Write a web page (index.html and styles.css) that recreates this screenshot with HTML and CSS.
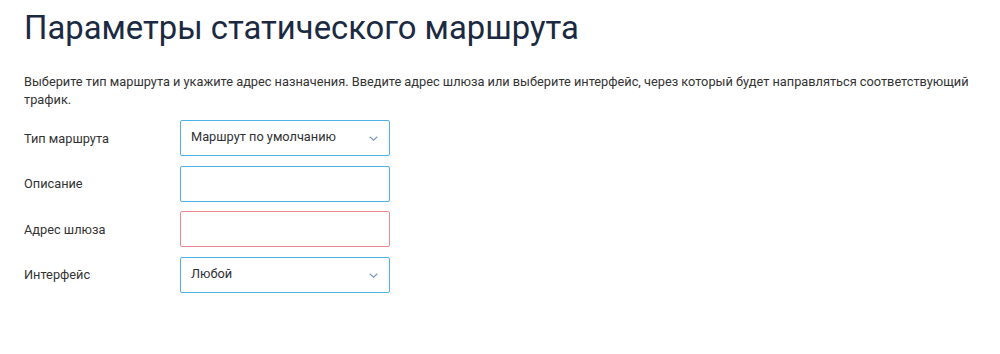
FILE: index.html
```html
<!DOCTYPE html>
<html lang="ru">
<head>
<meta charset="utf-8">
<link rel="stylesheet" href="styles.css">
</head>
<body>
<main class="page">
  <h1 class="title">Параметры статического маршрута</h1>
  <p class="desc">Выберите тип маршрута и укажите адрес назначения. Введите адрес шлюза или выберите интерфейс, через который будет направляться соответствующий трафик.</p>
  <form class="form">
    <div class="row">
      <span class="label">Тип маршрута</span>
      <div class="field select">
        <span class="value">Маршрут по умолчанию</span>
        <svg class="chev" width="9" height="5" viewBox="0 0 9 5"><path d="M0.7 0.7L4.5 4.2L8.3 0.7" fill="none" stroke="#7d9cc0" stroke-width="1.2"/></svg>
      </div>
    </div>
    <div class="row">
      <span class="label">Описание</span>
      <div class="field"></div>
    </div>
    <div class="row">
      <span class="label">Адрес шлюза</span>
      <div class="field error"></div>
    </div>
    <div class="row">
      <span class="label">Интерфейс</span>
      <div class="field select">
        <span class="value">Любой</span>
        <svg class="chev" width="9" height="5" viewBox="0 0 9 5"><path d="M0.7 0.7L4.5 4.2L8.3 0.7" fill="none" stroke="#7d9cc0" stroke-width="1.2"/></svg>
      </div>
    </div>
  </form>
</main>
</body>
</html>
```
FILE: styles.css
```css
html, body { margin: 0; padding: 0; background: #fff; }
body { font-family: Roboto, "Liberation Sans", sans-serif; color: #333; }
.page { padding: 8px 24px 0 24px; }
.title {
  margin: 0;
  font-size: 32.8px;
  font-weight: 400;
  line-height: 40px;
  color: #1b2a41;
}
.desc {
  margin: 24.6px 0 0 0;
  font-size: 12.78px;
  line-height: 18px;
  color: #333;
}
.form { margin-top: 11.6px; display: flex; flex-direction: column; gap: 9.5px; }
.row { display: flex; align-items: center; }
.label { width: 156px; font-size: 12.78px; color: #333; }
.field {
  box-sizing: border-box;
  width: 210px;
  height: 36px;
  border: 1px solid #4fb2e5;
  border-radius: 2px;
  display: flex;
  align-items: center;
  padding: 0 10px;
}
.field.error { border-color: #e88a90; }
.select { justify-content: space-between; padding-right: 11px; }
.value { font-size: 12.78px; color: #2f3136; margin-bottom: 3px; }
.chev { display: block; margin-top: 1px; }
```
